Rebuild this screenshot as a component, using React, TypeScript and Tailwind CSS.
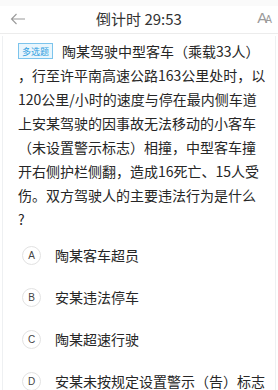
const lines = [
  "，行至许平南高速公路163公里处时，以",
  "120公里/小时的速度与停在最内侧车道",
  "上安某驾驶的因事故无法移动的小客车",
  "（未设置警示标志）相撞，中型客车撞",
  "开右侧护栏侧翻，造成16死亡、15人受",
  "伤。双方驾驶人的主要违法行为是什么",
  "?",
];

const options = [
  { key: "A", text: "陶某客车超员" },
  { key: "B", text: "安某违法停车" },
  { key: "C", text: "陶某超速行驶" },
  { key: "D", text: "安某未按规定设置警示（告）标志" },
];

const font = { fontFamily: '"Noto Sans CJK SC", "Noto Sans", sans-serif' };

export default function App() {
  return (
    <div className="w-[278px] h-[390px] overflow-hidden bg-white" style={font}>
      <div className="h-[6px] bg-[#fafafa]" />
      <div className="relative flex h-[28px] items-center justify-center border-b border-[#ececec]">
        <svg className="absolute left-[10px] top-[7px]" width="16" height="12" viewBox="0 0 16 12" fill="none" stroke="#9a9a9a" strokeWidth="1.1">
          <path d="M15 6H1.5M6.5 1L1.5 6l5 5" />
        </svg>
        <span className="text-[15px] text-[#333]">倒计时 29:53</span>
        <span className="absolute right-[8px] top-[4px] text-[15px] leading-none text-[#9a9a9a] tracking-[-2px]" style={{ fontFamily: '"Liberation Sans", sans-serif' }}>
          A<span className="text-[10px]">A</span>
        </span>
      </div>
      <div className="mx-[2px] mt-[2px] border-x border-[#eef0f2] pt-[3px] pl-[15px] h-[400px]">
        <div className="text-[14px] leading-[24px] text-[#262626]">
          <div className="flex items-center">
            <span className="mr-[9px] flex h-[16px] items-center border border-[#7cc4ec] bg-[#e9f6fd] px-[3px] text-[9px] leading-none text-[#2f9ee0]">
              多选题
            </span>
            <span>陶某驾驶中型客车（乘载33人）</span>
          </div>
          {lines.map((l, i) => (
            <div key={i} className="whitespace-nowrap">{l}</div>
          ))}
        </div>
        <div className="mt-[14px] flex flex-col gap-[22px] pl-[4px]">
          {options.map((o) => (
            <div key={o.key} className="flex items-center">
              <span className="flex h-[19px] w-[19px] items-center justify-center rounded-full border border-[#e2e2e2] text-[10px] text-[#444]" style={{ fontFamily: '"Liberation Sans", sans-serif' }}>
                {o.key}
              </span>
              <span className="ml-[14px] text-[14px] leading-[20px] text-[#262626]">{o.text}</span>
            </div>
          ))}
        </div>
      </div>
    </div>
  );
}
